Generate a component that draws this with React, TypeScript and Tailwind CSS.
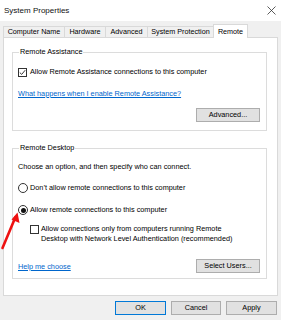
import React from "react"

const Checkbox = ({ checked }: { checked?: boolean }) => (
	<span className="flex items-center justify-center w-[9px] h-[9px] border border-[#333333] bg-white shrink-0">
		{checked && (
			<svg width="7" height="7" viewBox="0 0 7 7">
				<path d="M0.8 3.6 L2.7 5.4 L6.2 1.2" fill="none" stroke="#222222" strokeWidth="0.9" />
			</svg>
		)}
	</span>
)

const Radio = ({ checked }: { checked?: boolean }) => (
	<span className="flex items-center justify-center w-[10px] h-[10px] rounded-full border border-[#333333] bg-white shrink-0">
		{checked && <span className="block w-[5px] h-[5px] rounded-full bg-[#111111]" />}
	</span>
)

const Button = ({ label, w, primary }: { label: string; w: string; primary?: boolean }) => (
	<div className={`${w} h-[14px] flex items-center justify-center bg-[#e1e1e1] border ${primary ? "border-[#0078d7]" : "border-[#adadad]"} text-[7.3px] leading-[10px] text-black`}>
		{label}
	</div>
)

const tabs = [
	{ label: "Computer Name", w: "w-[62px]" },
	{ label: "Hardware", w: "w-[42px]" },
	{ label: "Advanced", w: "w-[43px]" },
	{ label: "System Protection", w: "w-[67px]" },
]

export default function App() {
	return (
		<div className="relative w-[281px] h-[320px] bg-[#f0f0f0] overflow-hidden text-black" style={{ fontFamily: '"Liberation Sans", Arial, sans-serif' }}>
			{/* title bar */}
			<div className="h-[21px] bg-white flex items-center justify-between pl-[4px] pr-[5px]">
				<span className="text-[8px] leading-[10px] text-[#111111]">System Properties</span>
				<svg width="9" height="9" viewBox="0 0 9 9">
					<path d="M0.5 0.5 L8.5 8.5 M8.5 0.5 L0.5 8.5" stroke="#333333" strokeWidth="0.8" />
				</svg>
			</div>

			{/* tabs */}
			<div className="relative z-10 mt-[3px] -mb-px flex items-end px-[3px] h-[14px]">
				{tabs.map((t, i) => (
					<div
						key={t.label}
						className={`${t.w} ${i > 0 ? "-ml-px" : ""} h-[12px] border border-[#d9d9d9] bg-[#f0f0f0] flex items-center justify-center text-[7.2px] leading-[10px]`}
					>
						{t.label}
					</div>
				))}
				<div className="-ml-px w-[35px] h-[14px] border border-b-0 border-[#d9d9d9] bg-white flex items-start justify-center pt-[2px] text-[7.2px] leading-[10px]">
					Remote
				</div>
			</div>

			{/* panel */}
			<div className="mx-[3px] h-[259px] border border-[#d9d9d9] bg-white pt-[9px] pl-[8px] pr-[10px]">
				<fieldset className="border border-[#dcdcdc] px-[5px] pb-[8px]">
					<legend className="ml-[1px] px-[1px] text-[7.3px] leading-[10px]">Remote Assistance</legend>
					<div className="mt-[10px] h-[10px] flex items-center gap-[3px] text-[7.3px] leading-[10px]">
						<Checkbox checked />
						<span>Allow Remote Assistance connections to this computer</span>
					</div>
					<div className="mt-[12px] h-[10px] text-[7.3px] leading-[10px] text-[#0066cc] underline">
						What happens when I enable Remote Assistance?
					</div>
					<div className="mt-[9px] flex justify-end pr-[1px]">
						<Button label="Advanced..." w="w-[64px]" />
					</div>
				</fieldset>

				<fieldset className="mt-[12px] border border-[#dcdcdc] px-[5px] pb-[5px]">
					<legend className="ml-[1px] px-[1px] text-[7.3px] leading-[10px]">Remote Desktop</legend>
					<div className="mt-[9px] h-[10px] text-[7.3px] leading-[10px]">
						Choose an option, and then specify who can connect.
					</div>
					<div className="mt-[11px] h-[10px] flex items-center gap-[2px] text-[7.3px] leading-[10px]">
						<Radio />
						<span>Don’t allow remote connections to this computer</span>
					</div>
					<div className="mt-[12px] h-[10px] flex items-center gap-[2px] text-[7.3px] leading-[10px]">
						<Radio checked />
						<span>Allow remote connections to this computer</span>
					</div>
					<div className="mt-[9px] ml-[12px] flex items-start gap-[2px] text-[7.3px] leading-[10px]">
						<span className="mt-[1px]">
							<Checkbox />
						</span>
						<span>
							Allow connections only from computers running Remote
							<br />
							Desktop with Network Level Authentication (recommended)
						</span>
					</div>
					<div className="mt-[15px] flex items-center justify-between pr-[1px]">
						<span className="mt-[2px] text-[7.3px] leading-[10px] text-[#0066cc] underline">Help me choose</span>
						<Button label="Select Users..." w="w-[64px]" />
					</div>
				</fieldset>
			</div>

			{/* bottom buttons */}
			<div className="mt-[5px] flex justify-end gap-[5px] pr-[4px]">
				<Button label="OK" w="w-[51px]" primary />
				<Button label="Cancel" w="w-[50px]" />
				<Button label="Apply" w="w-[51px]" />
			</div>

			{/* red arrow annotation */}
			<svg className="absolute left-0 top-0 pointer-events-none" width="281" height="320" viewBox="0 0 281 320">
				<path d="M2.5 248 L15.5 217" stroke="#ee1111" strokeWidth="2.6" strokeLinecap="round" />
				<path d="M17.5 212.5 L11.5 219.5 L19.5 223 Z" fill="#ee1111" />
			</svg>
		</div>
	)
}
